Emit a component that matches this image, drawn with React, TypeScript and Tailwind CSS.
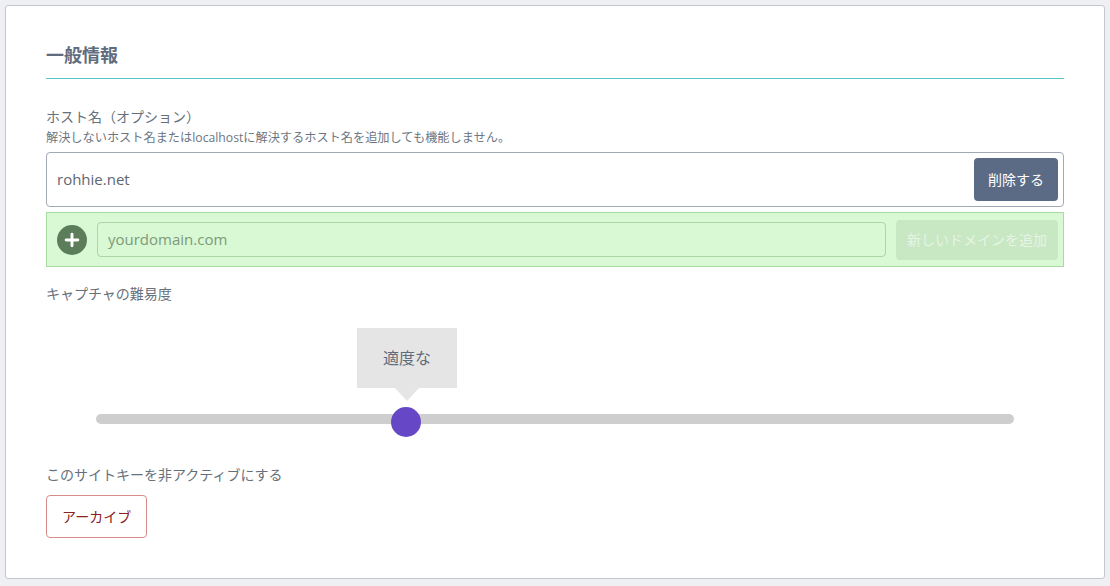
import { Plus } from 'lucide-react'

const font = '[font-family:"Open_Sans","Noto_Sans_CJK_JP",sans-serif]'

function HostRow({ host }: { host: string }) {
  return (
    <div className="flex h-[55px] items-center justify-between rounded border border-[#a3a9b3] bg-white pl-[10px] pr-[5px]">
      <span className="text-[15px] text-[#5f6670]">{host}</span>
      <button
        type="button"
        className="h-[43px] rounded bg-[#5b6b86] px-[14px] text-[14px] text-white"
      >
        削除する
      </button>
    </div>
  )
}

function AddRow() {
  return (
    <div className="mt-[5px] flex h-[55px] items-center gap-[10px] border border-[#a6dc9f] bg-[#d9f8d4] pl-[10px] pr-[5px]">
      <span className="flex h-[30px] w-[30px] shrink-0 items-center justify-center rounded-full bg-[#5b7d5a] text-white">
        <Plus size={20} strokeWidth={3.5} />
      </span>
      <div className="flex h-[35px] flex-1 items-center rounded border border-[#abd5a5] px-[10px] text-[15px] text-[#7c9a7a]">
        yourdomain.com
      </div>
      <button
        type="button"
        className="h-[40px] w-[162px] rounded bg-[#c8e7c3] text-[14px] text-[#e6f4e3]"
      >
        新しいドメインを追加
      </button>
    </div>
  )
}

function DifficultySlider() {
  return (
    <div className="relative mt-[24px] h-[110px] px-[50px]">
      <div className="absolute left-[311px] top-0 flex h-[60px] w-[100px] items-center justify-center bg-[#e5e5e5] text-[16px] text-[#5f6b7a]">
        適度な
        <span className="absolute left-1/2 top-full -translate-x-1/2 border-x-[12px] border-t-[13px] border-x-transparent border-t-[#e5e5e5]" />
      </div>
      <div className="absolute left-[50px] right-[50px] top-[86px] h-[10px] rounded-full bg-[#cecece]" />
      <div className="absolute left-[345px] top-[79px] h-[30px] w-[30px] rounded-full bg-[#6648c6]" />
    </div>
  )
}

export default function App() {
  return (
    <div className={`min-h-[586px] bg-[#eef0f4] p-[5px] ${font}`}>
      <div className="h-[574px] rounded-[3px] border border-[#c3c8cf] bg-white px-[40px] pt-[36px]">
        <h2 className="border-b border-b-[#5cc3c8] pb-[9px] text-[18px] font-bold text-[#5e6c7e]">
          一般情報
        </h2>

        <div className="mt-[28px]">
          <p className="text-[14px] leading-[20px] text-[#66707c]">ホスト名（オプション）</p>
          <p className="mt-[3px] text-[12.2px] leading-[16px] text-[#6c7682]">
            解決しないホスト名またはlocalhostに解決するホスト名を追加しても機能しません。
          </p>
          <div className="mt-[6px]">
            <HostRow host="rohhie.net" />
            <AddRow />
          </div>
        </div>

        <p className="mt-[17px] text-[14px] leading-[20px] text-[#66707c]">キャプチャの難易度</p>
        <DifficultySlider />

        <p className="mt-[27px] text-[14px] leading-[20px] text-[#66707c]">
          このサイトキーを非アクティブにする
        </p>
        <button
          type="button"
          className="mt-[10px] h-[43px] rounded border border-[#d88b8b] bg-white px-[15px] text-[14px] text-[#8a2020]"
        >
          アーカイブ
        </button>
      </div>
    </div>
  )
}
